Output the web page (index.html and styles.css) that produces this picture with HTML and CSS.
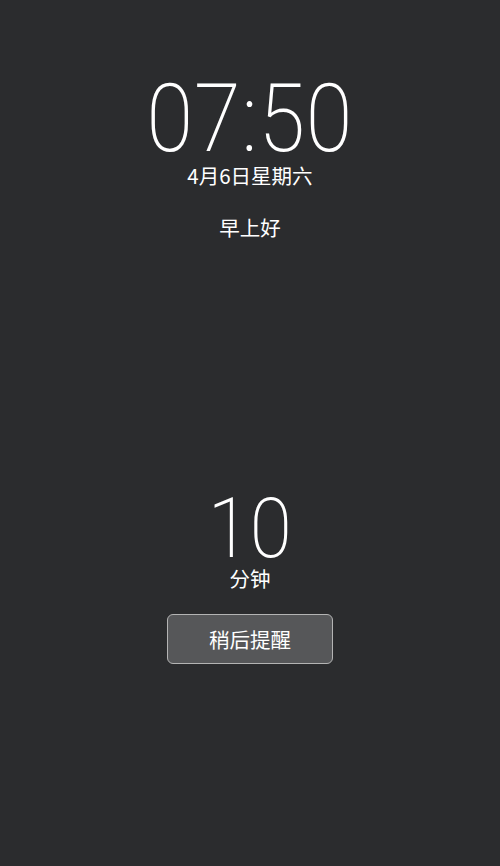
FILE: index.html
```html
<!DOCTYPE html>
<html lang="zh">
<head>
<meta charset="utf-8">
<link rel="stylesheet" href="styles.css">
</head>
<body>
<div class="screen">
  <div class="top">
    <div class="clock">07:50</div>
    <div class="date">4月6日星期六</div>
    <div class="greet">早上好</div>
  </div>
  <div class="snooze">
    <div class="minutes">10</div>
    <div class="unit">分钟</div>
    <button class="btn">稍后提醒</button>
  </div>
</div>
</body>
</html>
```
FILE: styles.css
```css
html, body {
  margin: 0;
  padding: 0;
  background: #2b2c2e;
}
.screen {
  width: 500px;
  height: 866px;
  display: flex;
  flex-direction: column;
  align-items: center;
  color: #ffffff;
  font-family: "Noto Sans CJK SC", "Noto Sans", sans-serif;
}
.top {
  display: flex;
  flex-direction: column;
  align-items: center;
  padding-top: 79px;
}
.clock {
  font-family: Roboto, "Noto Sans", sans-serif;
  font-weight: 200;
  font-size: 94px;
  line-height: 80px;
  letter-spacing: 1px;
  transform: scaleX(0.9);
}
.date {
  font-size: 20.5px;
  line-height: 28px;
  margin-top: 2px;
}
.greet {
  font-size: 20.5px;
  line-height: 28px;
  margin-top: 24px;
}
.snooze {
  display: flex;
  flex-direction: column;
  align-items: center;
  margin-top: 253px;
}
.minutes {
  font-family: Roboto, "Noto Sans", sans-serif;
  font-weight: 200;
  font-size: 83px;
  line-height: 70px;
  transform: scaleX(0.92);
}
.unit {
  font-size: 20.5px;
  line-height: 28px;
}
.btn {
  margin-top: 22px;
  width: 166px;
  height: 50px;
  background: #565759;
  border: 1px solid #b4b4b4;
  border-radius: 6px;
  color: #ffffff;
  font-family: "Noto Sans CJK SC", sans-serif;
  font-size: 20.5px;
  padding: 0;
}
```
